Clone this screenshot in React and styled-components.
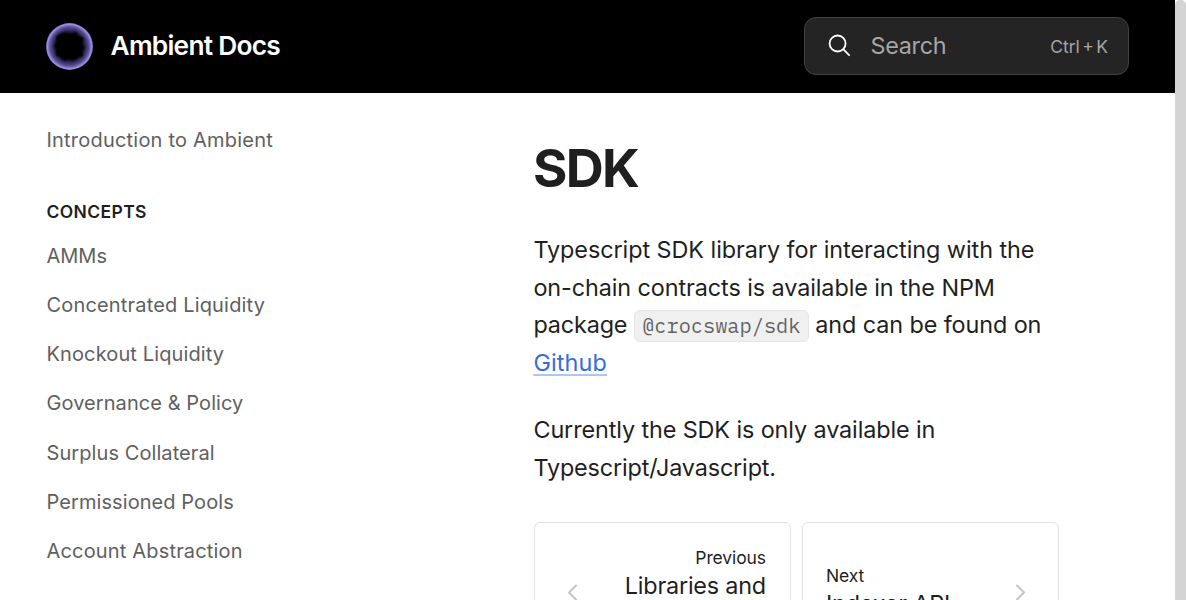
import React from "react";
import styled, { createGlobalStyle } from "styled-components";

const Global = createGlobalStyle`
  * { box-sizing: border-box; }
  html, body { margin: 0; height: 600px; overflow: hidden; background: #fff; }
  body { font-family: Inter, "Liberation Sans", sans-serif; color: #1f1f1f; }
`;

const Window = styled.div`
  display: grid;
  grid-template-columns: 1175px 11px;
  width: 1186px;
  height: 600px;
  overflow: hidden;
`;

const Page = styled.div`
  height: 600px;
  overflow: hidden;
`;

const Scrollbar = styled.div`
  background: #d4d4d4;
  border-radius: 5px 5px 0 0;
`;

const Header = styled.header`
  display: flex;
  align-items: center;
  justify-content: space-between;
  height: 93px;
  padding: 0 46px;
  background: #000;
`;

const Brand = styled.div`
  display: flex;
  align-items: center;
  gap: 17.5px;
  color: #fff;
  font-size: 26.3px;
  font-weight: 600;
  letter-spacing: -0.75px;
  line-height: 36px;
  white-space: nowrap;
`;

const BrandName = styled.span`
  margin-top: -2px;
`;

const SearchBox = styled.div`
  display: flex;
  align-items: center;
  width: 325px;
  height: 58px;
  margin-top: -1px;
  padding: 0 20px 0 23px;
  border: 1.5px solid #414141;
  border-radius: 12px;
  background: #242424;
  color: #a6a6a6;
`;

const SearchLabel = styled.span`
  flex: 1;
  margin-left: 18.5px;
  font-size: 23.4px;
  letter-spacing: -0.3px;
  line-height: 34px;
`;

const Shortcut = styled.span`
  font-size: 17.5px;
  word-spacing: -2.5px;
  margin-top: 1px;
`;

const Body = styled.div`
  display: grid;
  grid-template-columns: 534px 525px;
`;

const Sidebar = styled.nav`
  padding: 23px 0 0 46.5px;
`;

const NavItem = styled.div`
  height: 49.2px;
  line-height: 49.2px;
  font-size: 20px;
  color: #606060;
  letter-spacing: ${(p) => p.$tracking}px;
`;

const NavHeading = styled.div`
  margin-top: 29px;
  height: 36px;
  line-height: 36px;
  margin-bottom: 1.7px;
  font-size: 17.5px;
  font-weight: 600;
  letter-spacing: 0.38px;
`;

const Main = styled.main`
  padding-top: 42px;
`;

const Title = styled.h1`
  margin: 0 0 30px -1px;
  font-size: 52.6px;
  line-height: 66px;
  font-weight: 700;
  letter-spacing: -1.7px;
`;

const Paragraph = styled.p`
  margin: 0 0 30px -0.6px;
  font-size: 23.4px;
  line-height: 37.6px;
  white-space: nowrap;
`;

const Run = styled.span`
  letter-spacing: ${(p) => p.$tracking}px;
`;

const Code = styled.code`
  display: inline-block;
  height: 32px;
  margin: -2px 0;
  padding: 0 7.4px;
  border: 1px solid #e6e6e6;
  border-radius: 6px;
  background: #f0f0f0;
  color: #636363;
  font-family: "IBM Plex Mono", "Liberation Mono", monospace;
  font-size: 20.3px;
  line-height: 29px;
`;

const Link = styled.a`
  color: #346ddb;
  letter-spacing: 0.15px;
  text-decoration: underline 2px #aec5f1;
  text-underline-offset: 3px;
  text-decoration-skip-ink: none;
`;

const Pager = styled.div`
  display: grid;
  grid-template-columns: 257px 257px;
  gap: 11px;
  margin-top: 35px;
`;

const PagerCard = styled.div`
  display: flex;
  align-items: center;
  justify-content: space-between;
  height: 142px;
  padding: 0 24px 0 ${(p) => (p.$align === "left" ? 23 : 24)}px;
  border: 1px solid #e2e2e2;
  border-radius: 6px;
  text-align: ${(p) => p.$align};
`;

const PagerText = styled.div`
  padding-top: 3px;
`;

const PagerHint = styled.div`
  font-size: 17.5px;
  line-height: 20px;
  letter-spacing: -0.1px;
`;

const PagerTitle = styled.div`
  font-size: 23.4px;
  line-height: 36px;
  letter-spacing: -0.2px;
  white-space: nowrap;
`;

const concepts = [
  ["AMMs", 0],
  ["Concentrated Liquidity", 0.17],
  ["Knockout Liquidity", 0.12],
  ["Governance & Policy", 0.07],
  ["Surplus Collateral", 0.08],
  ["Permissioned Pools", 0.08],
  ["Account Abstraction", 0.17],
];

const Logo = () => (
  <svg width="47" height="47" viewBox="0 0 47 47">
    <defs>
      <radialGradient id="halo">
        <stop offset="0.5" stopColor="#17142c" />
        <stop offset="0.66" stopColor="#2d2856" />
        <stop offset="0.8" stopColor="#4c4488" />
        <stop offset="0.88" stopColor="#7066b2" />
        <stop offset="0.94" stopColor="#978ce0" />
        <stop offset="1" stopColor="#887dcd" />
      </radialGradient>
      <filter id="soft"><feGaussianBlur stdDeviation="1.1" /></filter>
    </defs>
    <circle cx="23.5" cy="23.5" r="23.4" fill="url(#halo)" />
    <path
      d="M14 10.5L20 9L24.5 10.5L30 8.5L33 12.5L38 15L36.5 20L39 24.5L36.5 29L37.5 33L32 35L28 38L23.5 36.5L18 38L14.5 35L9.5 32L10 28L8 23L10 18L10 13.5Z"
      fill="#000"
      filter="url(#soft)"
    />
  </svg>
);

const SearchIcon = () => (
  <svg width="24" height="24" viewBox="0 0 24 24" fill="none" stroke="#fff" strokeWidth="1.8">
    <circle cx="9.6" cy="9.5" r="8" />
    <path d="M15.2 15.2l6.4 6.4" />
  </svg>
);

const Chevron = ({ d }) => (
  <svg width="26" height="20" viewBox="0 0 26 20" fill="none" stroke="#c4c4c4" strokeWidth="2" strokeLinecap="round" strokeLinejoin="round">
    <path d={d} />
  </svg>
);

export default function App() {
  return (
    <Window>
      <Global />
      <Page>
        <Header>
          <Brand>
            <Logo />
            <BrandName>Ambient Docs</BrandName>
          </Brand>
          <SearchBox>
            <SearchIcon />
            <SearchLabel>Search</SearchLabel>
            <Shortcut>Ctrl + K</Shortcut>
          </SearchBox>
        </Header>
        <Body>
          <Sidebar>
            <NavItem $tracking={0.21}>Introduction to Ambient</NavItem>
            <NavHeading>CONCEPTS</NavHeading>
            {concepts.map(([name, tracking]) => (
              <NavItem key={name} $tracking={tracking}>{name}</NavItem>
            ))}
          </Sidebar>
          <Main>
            <Title>SDK</Title>
            <Paragraph>
              <Run $tracking={-0.06}>Typescript SDK library for interacting with the</Run>
              <br />
              <Run $tracking={-0.09}>on-chain contracts is available in the NPM</Run>
              <br />
              <Run $tracking={-0.15}>package </Run>
              <Code>@crocswap/sdk</Code>
              <Run $tracking={-0.1}> and can be found on</Run>
              <br />
              <Link>Github</Link>
            </Paragraph>
            <Paragraph>
              <Run $tracking={-0.11}>Currently the SDK is only available in</Run>
              <br />
              <Run $tracking={-0.15}>Typescript/Javascript.</Run>
            </Paragraph>
            <Pager>
              <PagerCard $align="right">
                <Chevron d="M17 2.5L10 9.5l7 7" />
                <PagerText>
                  <PagerHint>Previous</PagerHint>
                  <PagerTitle>
                    Libraries and
                    <br />
                    APIs
                  </PagerTitle>
                </PagerText>
              </PagerCard>
              <PagerCard $align="left">
                <PagerText>
                  <PagerHint>Next</PagerHint>
                  <PagerTitle>Indexer API</PagerTitle>
                </PagerText>
                <Chevron d="M9 2.5l7 7-7 7" />
              </PagerCard>
            </Pager>
          </Main>
        </Body>
      </Page>
      <Scrollbar />
    </Window>
  );
}
